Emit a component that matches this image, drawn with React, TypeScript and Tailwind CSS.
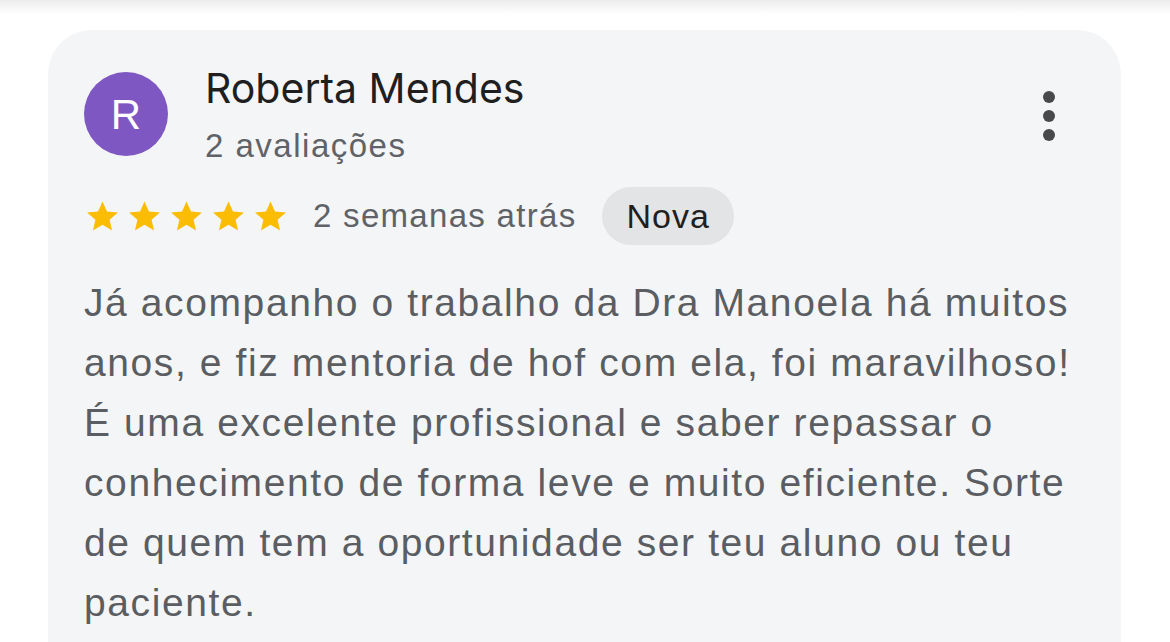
const reviewLines = [
  "Já acompanho o trabalho da Dra Manoela há muitos",
  "anos, e fiz mentoria de hof com ela, foi maravilhoso!",
  "É uma excelente profissional e saber repassar o",
  "conhecimento de forma leve e muito eficiente. Sorte",
  "de quem tem a oportunidade ser teu aluno ou teu",
  "paciente.",
];

function Stars() {
  return (
    <div className="flex items-center gap-[5px]">
      {[0, 1, 2, 3, 4].map((i) => (
        <svg key={i} viewBox="0 0 24 24" className="w-[37px] h-[37px]">
          <path
            d="M12 2.2l2.9 6.6 7.1.6-5.4 4.7 1.6 7L12 17.4l-6.2 3.7 1.6-7L2 9.4l7.1-.6L12 2.2z"
            fill="#fbbc04"
          />
        </svg>
      ))}
    </div>
  );
}

export default function App() {
  return (
    <div
      className="w-[1170px] h-[642px] bg-white overflow-hidden"
      style={{ fontFamily: "'Liberation Sans', Arial, sans-serif" }}
    >
      <div className="h-[14px] bg-gradient-to-b from-[#ececec] to-white" />
      <div className="ml-[48px] mt-[16px] w-[1073px] h-[700px] bg-[#f4f5f7] rounded-[44px] pl-[36px] pr-[48px] pt-[42px]">
        <div className="flex items-start">
          <div className="w-[84px] h-[84px] rounded-full bg-[#7e57c2] flex items-center justify-center text-white text-[42px]">
            R
          </div>
          <div className="ml-[37px] flex-1 -mt-[10px]">
            <div
              className="text-[41px] leading-[52px] text-[#1f1f1f]"
              style={{ fontFamily: "Inter, 'Open Sans', sans-serif" }}
            >
              Roberta Mendes
            </div>
            <div className="mt-[6px] text-[33px] leading-[52px] tracking-[1.5px] text-[#5f6368]">
              2 avaliações
            </div>
          </div>
          <div className="flex flex-col gap-[7px] mt-[19px] mr-[18px]">
            <span className="w-[12px] h-[12px] rounded-full bg-[#47494b]" />
            <span className="w-[12px] h-[12px] rounded-full bg-[#47494b]" />
            <span className="w-[12px] h-[12px] rounded-full bg-[#47494b]" />
          </div>
        </div>
        <div className="flex items-center mt-[15px]">
          <Stars />
          <span className="ml-[24px] text-[33px] tracking-[1.3px] text-[#5f6368]">2 semanas atrás</span>
          <span className="ml-[26px] h-[58px] px-[24px] rounded-full bg-[#e3e4e6] flex items-center text-[34px] tracking-[1px] text-[#1f1f1f]">
            Nova
          </span>
        </div>
        <div className="mt-[28px] text-[39px] leading-[60px] tracking-[1.6px] text-[#5a5d61]">
          {reviewLines.map((line, i) => (
            <div key={i} className="whitespace-nowrap">
              {line}
            </div>
          ))}
        </div>
      </div>
    </div>
  );
}
